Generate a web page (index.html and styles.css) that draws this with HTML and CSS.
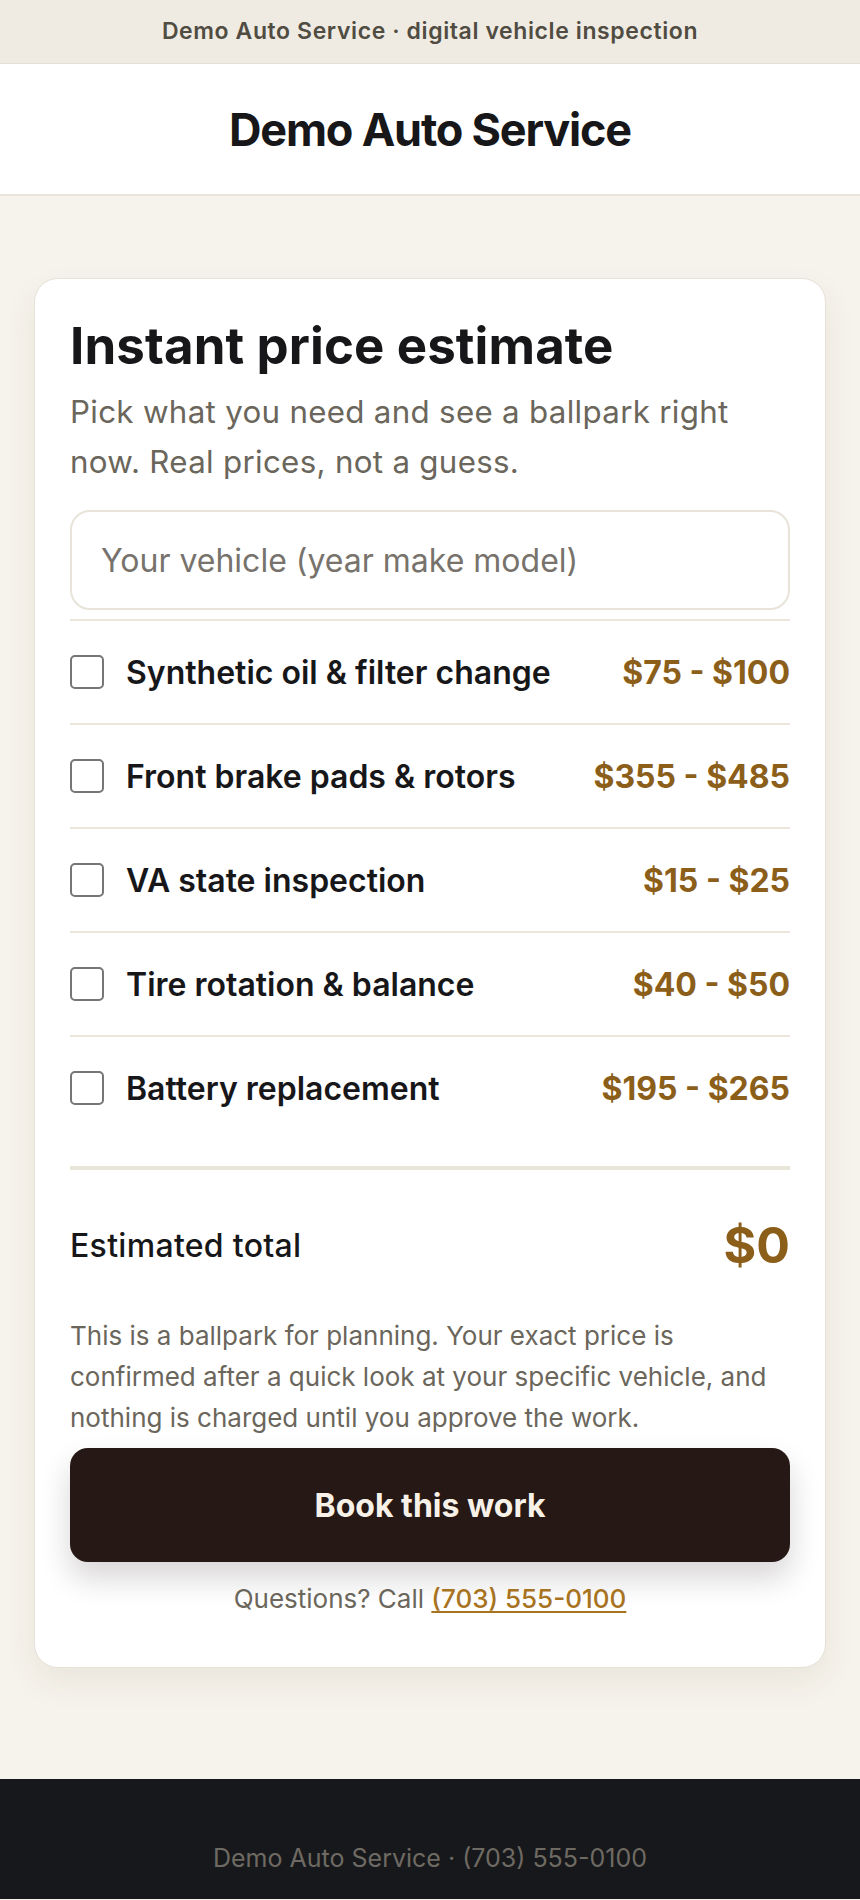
FILE: index.html
```html
<!DOCTYPE html>
<html lang="en">
<head>
<meta charset="utf-8">
<title>Demo Auto Service</title>
<link rel="stylesheet" href="styles.css">
</head>
<body>
<div class="topbar">Demo Auto Service · digital vehicle inspection</div>
<header class="site-header"><h1 class="brand">Demo Auto Service</h1></header>
<main class="main">
  <section class="card">
    <h2 class="card-title">Instant price estimate</h2>
    <p class="card-sub">Pick what you need and see a ballpark right now. Real prices, not a guess.</p>
    <input class="vehicle" type="text" placeholder="Your vehicle (year make model)">
    <ul class="services">
      <li class="service"><label class="svc-label"><input class="check" type="checkbox"><span>Synthetic oil &amp; filter change</span></label><span class="price">$75 - $100</span></li>
      <li class="service"><label class="svc-label"><input class="check" type="checkbox"><span>Front brake pads &amp; rotors</span></label><span class="price">$355 - $485</span></li>
      <li class="service"><label class="svc-label"><input class="check" type="checkbox"><span>VA state inspection</span></label><span class="price">$15 - $25</span></li>
      <li class="service"><label class="svc-label"><input class="check" type="checkbox"><span>Tire rotation &amp; balance</span></label><span class="price">$40 - $50</span></li>
      <li class="service"><label class="svc-label"><input class="check" type="checkbox"><span>Battery replacement</span></label><span class="price">$195 - $265</span></li>
    </ul>
    <div class="total">
      <span class="total-label">Estimated total</span>
      <span class="total-value">$0</span>
    </div>
    <p class="note">This is a ballpark for planning. Your exact price is confirmed after a quick look at your specific vehicle, and nothing is charged until you approve the work.</p>
    <button class="book" type="button">Book this work</button>
    <p class="call">Questions? Call <a class="phone" href="#">(703) 555-0100</a></p>
  </section>
</main>
<footer class="footer">Demo Auto Service · (703) 555-0100</footer>
</body>
</html>
```
FILE: styles.css
```css
* { box-sizing: border-box; }
html, body { margin: 0; padding: 0; }
body {
  font-family: Inter, "Noto Sans", "Liberation Sans", sans-serif;
  background: #f6f3ec;
  color: #17171a;
}
.topbar {
  height: 64px;
  background: #efebe3;
  border-bottom: 1px solid #e4dfd3;
  display: flex;
  align-items: center;
  justify-content: center;
  font-size: 23px;
  font-weight: 600;
  color: #514c42;
  letter-spacing: 0.6px;
  padding-bottom: 2px;
}
.site-header {
  height: 132px;
  background: #ffffff;
  border-bottom: 2px solid #e9e5dc;
  display: flex;
  align-items: center;
  justify-content: center;
}
.brand {
  margin: 0;
  font-size: 45px;
  font-weight: 700;
  letter-spacing: -1.2px;
  color: #17171a;
}
.main {
  padding: 82px 34px 111px;
}
.card {
  background: #ffffff;
  border: 1px solid #e6e2d8;
  border-radius: 24px;
  padding: 37px 35px 50px;
  box-shadow: 0 14px 34px rgba(70, 55, 30, 0.07);
}
.card-title {
  margin: 0;
  font-size: 51px;
  line-height: 60px;
  font-weight: 700;
  letter-spacing: 0.1px;
  color: #17171a;
}
.card-sub {
  margin: 11px 0 0;
  font-size: 31.3px;
  line-height: 50px;
  letter-spacing: 0.3px;
  color: #6b665b;
}
.vehicle {
  display: block;
  width: 100%;
  height: 100px;
  margin-top: 23px;
  border: 2px solid #e8e4da;
  border-radius: 20px;
  padding: 0 29px;
  font-family: inherit;
  font-size: 32px;
  color: #17171a;
  background: #fff;
  outline: none;
}
.vehicle::placeholder { color: #77736c; }
.services {
  list-style: none;
  margin: 9px 0 0;
  padding: 0 0 27px;
  border-bottom: 4px solid #e8e5d9;
}
.service {
  display: flex;
  align-items: center;
  justify-content: space-between;
  height: 104px;
  border-top: 2px solid #ebe7dd;
}
.svc-label {
  display: flex;
  align-items: center;
  gap: 22px;
  font-size: 32px;
  font-weight: 600;
  color: #17171a;
}
.check {
  appearance: none;
  -webkit-appearance: none;
  margin: 0;
  width: 34px;
  height: 34px;
  border: 2px solid #767676;
  border-radius: 5px;
  background: #fff;
  flex: none;
}
.price {
  font-size: 32px;
  font-weight: 700;
  color: #8b5e1a;
}
.total {
  display: flex;
  align-items: center;
  justify-content: space-between;
  padding-top: 45px;
  height: 105px;
}
.total-label {
  font-size: 32px;
  font-weight: 500;
  letter-spacing: 0.3px;
  color: #17171a;
}
.total-value {
  font-size: 50px;
  line-height: 60px;
  font-weight: 700;
  color: #8b5e1a;
}
.note {
  margin: 40px 0 0;
  font-size: 26px;
  line-height: 41px;
  color: #6b665b;
}
.book {
  display: block;
  width: 100%;
  height: 114px;
  margin-top: 10px;
  border: none;
  border-radius: 18px;
  background: #261814;
  color: #f7f1e8;
  font-family: inherit;
  font-size: 32px;
  font-weight: 700;
  box-shadow: 0 16px 30px rgba(38, 24, 20, 0.18);
}
.call {
  margin: 19px 0 0;
  text-align: center;
  font-size: 26px;
  line-height: 36px;
  color: #6b665b;
}
.phone {
  color: #a8731f;
  font-weight: 500;
  text-decoration: underline;
  text-underline-offset: 3px;
}
.footer {
  height: 120px;
  background: #17181b;
  color: #6e6a63;
  display: flex;
  align-items: center;
  justify-content: center;
  font-size: 25px;
  padding-top: 38px;
}
```
